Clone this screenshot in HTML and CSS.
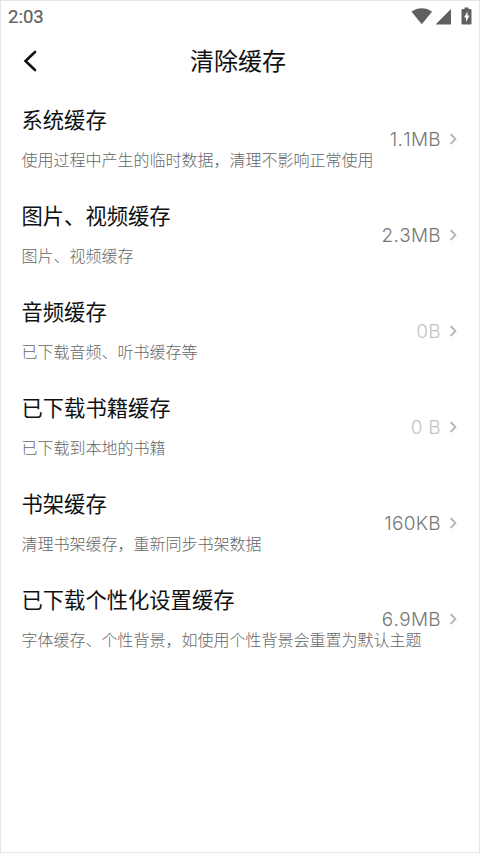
FILE: index.html
```html
<!DOCTYPE html>
<html lang="zh-CN">
<head>
<meta charset="utf-8">
<title>清除缓存</title>
<link rel="stylesheet" href="styles.css">
</head>
<body>
<div class="screen">
  <div class="status">
    <span class="time">2:03</span>
    <svg class="status-icons" width="62" height="20" viewBox="0 0 62 20">
      <path d="M0.500 4.700C6.500 0.100 15 0.100 21 4.700L10.750 17.300Z"/>
      <path d="M40 2V17.500H24.500Z"/>
      <path fill-rule="evenodd" d="M53.500 2V0.500H57.500V2H59.500Q60.500 2 60.500 3V16.500Q60.500 17.500 59.500 17.500H51.500Q50.500 17.500 50.500 16.500V3Q50.500 2 51.500 2ZM56.500 4.500L53 10.500H55V15L58.500 8.500H56.500Z"/>
    </svg>
  </div>
  <header class="header">
    <svg class="back" width="16" height="24" viewBox="0 0 16 24"><path d="M13 3L3.500 12L13 21"/></svg>
    <h1 class="title">清除缓存</h1>
  </header>
  <main class="list">
    <section class="row"><div class="info"><h2>系统缓存</h2><p>使用过程中产生的临时数据，清理不影响正常使用</p></div><div class="value">1.1MB<svg class="chevron" viewBox="0 0 8 12"><path d="M1.500 1L6.500 6L1.500 11"/></svg></div></section>
    <section class="row"><div class="info"><h2>图片、视频缓存</h2><p>图片、视频缓存</p></div><div class="value">2.3MB<svg class="chevron" viewBox="0 0 8 12"><path d="M1.500 1L6.500 6L1.500 11"/></svg></div></section>
    <section class="row"><div class="info"><h2>音频缓存</h2><p>已下载音频、听书缓存等</p></div><div class="value empty">0B<svg class="chevron" viewBox="0 0 8 12"><path d="M1.500 1L6.500 6L1.500 11"/></svg></div></section>
    <section class="row"><div class="info"><h2>已下载书籍缓存</h2><p>已下载到本地的书籍</p></div><div class="value empty">0 B<svg class="chevron" viewBox="0 0 8 12"><path d="M1.500 1L6.500 6L1.500 11"/></svg></div></section>
    <section class="row"><div class="info"><h2>书架缓存</h2><p>清理书架缓存，重新同步书架数据</p></div><div class="value">160KB<svg class="chevron" viewBox="0 0 8 12"><path d="M1.500 1L6.500 6L1.500 11"/></svg></div></section>
    <section class="row"><div class="info"><h2>已下载个性化设置缓存</h2><p>字体缓存、个性背景，如使用个性背景会重置为默认主题</p></div><div class="value">6.9MB<svg class="chevron" viewBox="0 0 8 12"><path d="M1.500 1L6.500 6L1.500 11"/></svg></div></section>
  </main>
</div>
</body>
</html>
```
FILE: styles.css
```css
* { box-sizing: border-box; }
body { margin: 0; background: #fff; font-family: Inter, "Noto Sans CJK SC", sans-serif; }
.screen { height: 853px; border: 1px solid #e5e5e5; overflow: hidden; }
.status { height: 32px; padding: 0 6px 0 7px; display: flex; align-items: center; justify-content: space-between; }
.time { font: 400 18.500px/32px Roboto, sans-serif; color: #606060; -webkit-text-stroke: 0.200px #606060; }
.status-icons { fill: #606060; }
.header { height: 56px; display: grid; grid-template-columns: 56px 1fr 60px; align-items: center; }
.back { margin-left: 21px; fill: none; stroke: #111; stroke-width: 2.600; stroke-linecap: round; }
.title { margin: 0; text-align: center; font: 400 24px/36px "Noto Sans CJK SC", sans-serif; color: #111; position: relative; top: -1px; }
.list { padding: 2px 22px 0 20.500px; }
.row { height: 96px; display: flex; align-items: center; white-space: nowrap; }
.info { width: 350px; flex: none; }
.info h2 { margin: 0; font: 400 21.300px/40px "Noto Sans CJK SC", sans-serif; color: #111; }
.info p { margin: 0; font: 300 16px/40px "Noto Sans CJK SC", sans-serif; color: #666; }
.value { flex: 1; display: flex; align-items: center; justify-content: flex-end; font-size: 19px; font-weight: 300; font-kerning: none; letter-spacing: 0.300px; color: #777; }
.empty { color: #c4c4c4; }
.chevron { width: 8px; height: 12px; margin-left: 8px; fill: none; stroke: #b4b4b4; stroke-width: 1.800; }
```
